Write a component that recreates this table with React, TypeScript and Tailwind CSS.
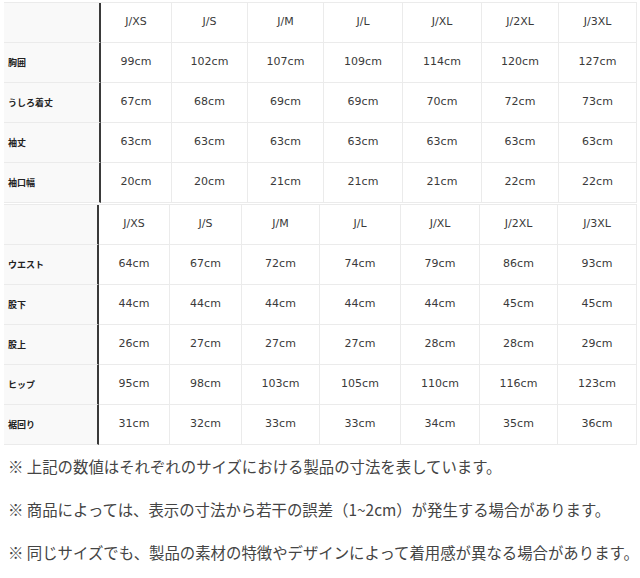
import React from "react";

const sizes = ["J/XS", "J/S", "J/M", "J/L", "J/XL", "J/2XL", "J/3XL"];

const top = [
  { label: "胸囲", values: ["99cm", "102cm", "107cm", "109cm", "114cm", "120cm", "127cm"] },
  { label: "うしろ着丈", values: ["67cm", "68cm", "69cm", "69cm", "70cm", "72cm", "73cm"] },
  { label: "袖丈", values: ["63cm", "63cm", "63cm", "63cm", "63cm", "63cm", "63cm"] },
  { label: "袖口幅", values: ["20cm", "20cm", "21cm", "21cm", "21cm", "22cm", "22cm"] },
];

const bottom = [
  { label: "ウエスト", values: ["64cm", "67cm", "72cm", "74cm", "79cm", "86cm", "93cm"] },
  { label: "股下", values: ["44cm", "44cm", "44cm", "44cm", "44cm", "45cm", "45cm"] },
  { label: "股上", values: ["26cm", "27cm", "27cm", "27cm", "28cm", "28cm", "29cm"] },
  { label: "ヒップ", values: ["95cm", "98cm", "103cm", "105cm", "110cm", "116cm", "123cm"] },
  { label: "裾回り", values: ["31cm", "32cm", "33cm", "33cm", "34cm", "35cm", "36cm"] },
];

const labelCls =
  "h-[40px] flex items-center pl-[4px] bg-[#f9f9f9] border-b border-b-[#ebebeb] border-r-2 border-r-[#3a3a3a] text-[9px] font-bold text-[#222] [font-family:'Noto_Sans_CJK_JP',sans-serif]";
const cellCls =
  "h-[40px] flex items-center justify-center bg-white border-b border-r border-[#ebebeb] text-[11px] text-[#3a3a3a] [font-family:'DejaVu_Sans',sans-serif]";

function SizeTable({
  rows,
  cols,
}: {
  rows: { label: string; values: string[] }[];
  cols: string;
}) {
  return (
    <div className={`grid ${cols} border-t border-[#ebebeb]`}>
      <div className={labelCls}></div>
      {sizes.map((s) => (
        <div key={s} className={cellCls}>
          {s}
        </div>
      ))}
      {rows.map((r) => (
        <React.Fragment key={r.label}>
          <div className={labelCls}>{r.label}</div>
          {r.values.map((v, i) => (
            <div key={i} className={cellCls}>
              {v}
            </div>
          ))}
        </React.Fragment>
      ))}
    </div>
  );
}

export default function App() {
  return (
    <div className="w-[640px] h-[578px] bg-white overflow-hidden pt-[2px] pl-[4px] pr-[3px]">
      <SizeTable rows={top} cols="grid-cols-[97px_71px_76px_76px_79px_79px_77px_78px]" />
      <div className="h-[1px]" />
      <SizeTable rows={bottom} cols="grid-cols-[95px_71px_72px_78px_81px_79px_78px_79px]" />
      <div className="-mr-[3px] pl-[4px] text-[15.4px] leading-[43px] text-[#444] [font-family:'Noto_Sans_CJK_JP',sans-serif] whitespace-nowrap">
        <p>※ 上記の数値はそれぞれのサイズにおける製品の寸法を表しています。</p>
        <p>※ 商品によっては、表示の寸法から若干の誤差（1~2cm）が発生する場合があります。</p>
        <p>※ 同じサイズでも、製品の素材の特徴やデザインによって着用感が異なる場合があります。</p>
      </div>
    </div>
  );
}
